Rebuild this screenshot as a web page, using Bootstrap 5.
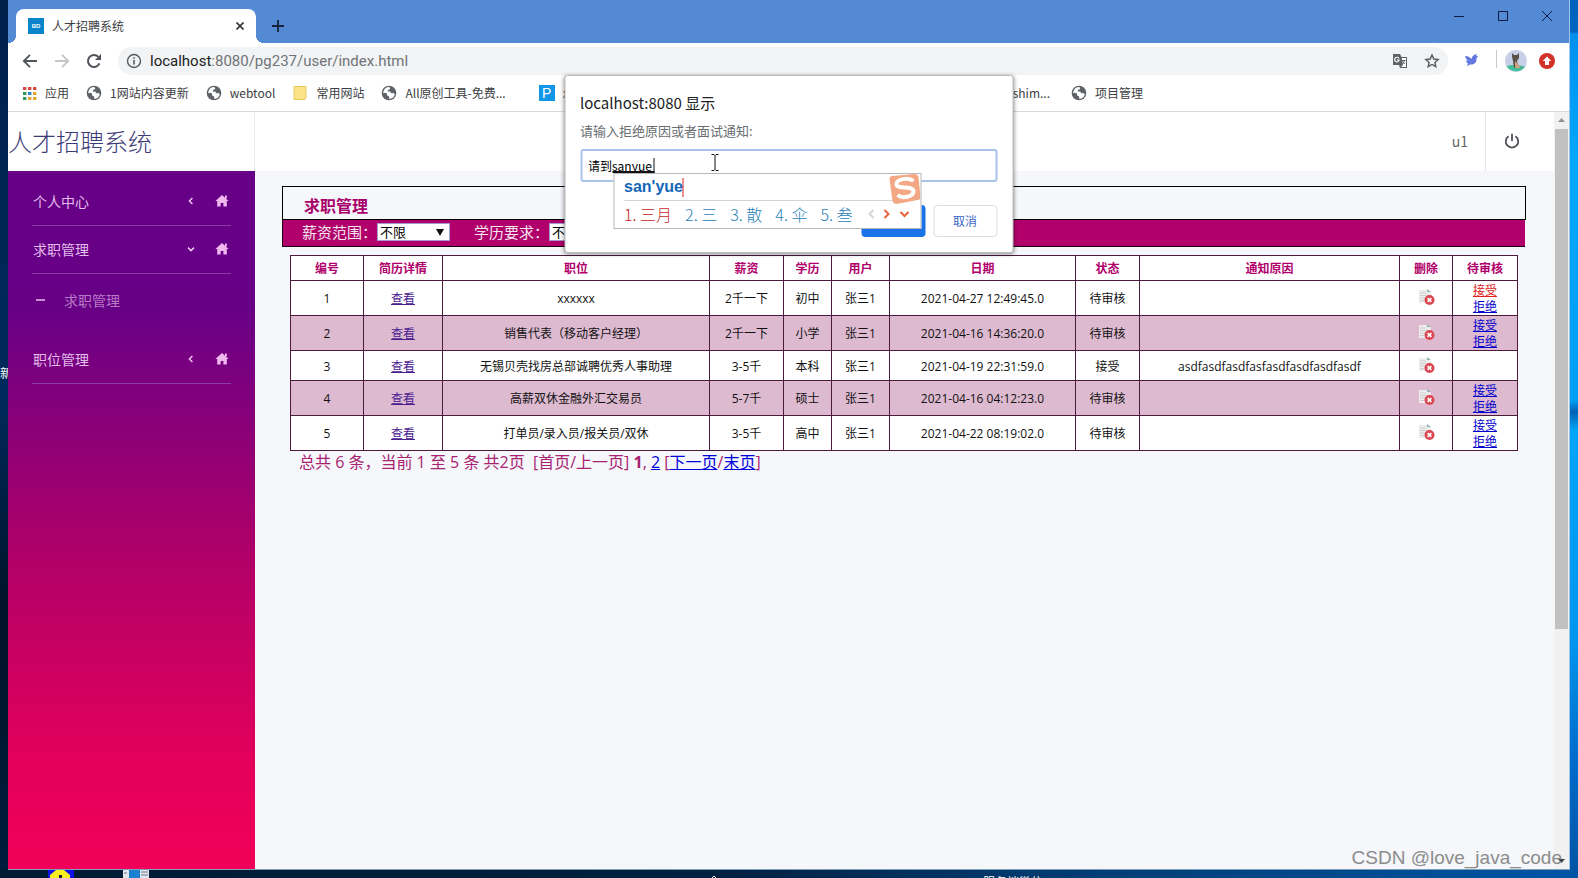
<!DOCTYPE html>
<html lang="zh-CN">
<head>
<meta charset="utf-8">
<meta name="viewport" content="width=device-width, initial-scale=1">
<title>人才招聘系统</title>
<link href="https://cdn.jsdelivr.net/npm/bootstrap@5.3.0/dist/css/bootstrap.min.css" rel="stylesheet">
<script src="https://cdn.jsdelivr.net/npm/bootstrap@5.3.0/dist/js/bootstrap.bundle.min.js"></script>
<style>
  body {
    font-family: "Noto Sans CJK SC", "Noto Sans", sans-serif;
    font-size: 12px;
    line-height: 16px;
    color: #222;
    background: linear-gradient(90deg, #001a33 0%, #00203f 45%, #003a6e 65%, #0055a5 100%);
    overflow: hidden;
  }
  svg { flex: none; display: block; }
  button { background: none; border: 0; padding: 0; color: inherit; }
  .desk-left { flex: none; width: 8px; background: linear-gradient(#00204a, #002a5c 45%, #001228 70%, #001c3c); }
  .desk-right { flex: none; width: 8px; background: linear-gradient(#0062ba 0, #0066c0 32px, #0090f0 34px, #00a8fa 160px, #00a0f4 400px, #0062b4 412px, #00a6f8 430px, #0096ee 640px, #006ccc 760px, #0055a5); }
  .desk-word { margin-top: 365px; color: #fff; width: 8px; overflow: hidden; white-space: nowrap; }
  .desk-bottom { height: 8px; overflow: hidden; color: #fff; }
  .browser { border-right: 1px solid #9fc4ea; border-bottom: 1px solid #7f9fb8; background: #fff; min-width: 0; }

  /* browser frame */
  .tab-strip { height: 43px; background: #5489d4; padding-left: 8px; }
  .tab-active { width: 240px; height: 34px; margin-top: 9px; background: #fff; border-radius: 8px 8px 0 0; padding: 0 12px; color: #3c4043; }
  .tab-active::before, .tab-active::after { content: ""; position: absolute; bottom: 0; width: 8px; height: 8px; }
  .tab-active::before { left: -8px; background: radial-gradient(circle at 0 0, transparent 8px, #fff 8px); }
  .tab-active::after { right: -8px; background: radial-gradient(circle at 100% 0, transparent 8px, #fff 8px); }
  .favicon { width: 16px; height: 16px; background: #0a85cc; color: #fff; font: bold 6px/16px "Liberation Sans", sans-serif; text-align: center; }
  .address-row { height: 36px; padding: 0 14px; }
  .omnibox { height: 28px; border-radius: 14px; background: #f1f3f4; padding: 0 8px; }
  .url-text { font: 15px/20px Roboto, "Noto Sans", sans-serif; color: #707478; text-decoration: none; }
  .url-text span { color: #202124; }
  .update-btn { margin-left: 12px; }
  .bookmarks { height: 33px; border-bottom: 1px solid #d8dadc; padding: 0 14px 4px; gap: 17px; white-space: nowrap; }
  .bookmarks a { color: #3c4043; text-decoration: none; gap: 8px; }
  .long-mark { width: 457px; }
  .p-logo { width: 16px; height: 16px; background: #1296e8; color: #fff; font: 14px/16px "Liberation Sans", sans-serif; text-align: center; }

  /* page header */
  .app-head { height: 59px; background: #fff; }
  .app-brand { width: 247px; padding-bottom: 2px; border-right: 1px solid #e8eaec; font-size: 24px; line-height: 32px; color: #3b3b78; text-decoration: none; font-weight: 300; }
  .user-name { font-size: 14px; color: #666; padding: 0 17px 2px; border-right: 1px solid #e4e6e8; }
  .power { width: 68px; padding: 0 0 2px 18px; }

  /* side menu */
  .side { flex: none; width: 247px; padding: 7px 24px; background: linear-gradient(#660087 0, #680086 20%, #b00068 55%, #e4005b 85%, #f00058 100%); }
  .side a { height: 48px; font-size: 14px; color: #e3bdec; text-decoration: none; }
  .side .menu-top { border-bottom: 1px solid #8c3aa4; gap: 20px; padding: 0 2px 2px 1px; }
  .side .menu-sub { height: 52px; margin-bottom: 10px; color: #b77ac6; gap: 19px; padding-left: 4px; }

  .content { background: #f5f7fb; padding: 15px 28px 0 27px; min-width: 0; }
  .title-box { height: 34px; border: 1px solid #000; padding-left: 21px; font-size: 16px; font-weight: 700; color: #a8006a; }
  .filter-bar { height: 27px; background: #b1006b; border: 1px solid #1c0010; border-top: 0; border-right: 0; margin-right: 1px; padding: 0 0 2px 19px; color: #f4e6ef; font-size: 15px; }
  .filter-bar select { width: 73px; height: 18px; border: 1px solid #a59ad0; border-radius: 0; background: #fff; color: #000; font-size: 13px; line-height: 16px; padding: 0 2px; appearance: none; }
  .pick::after { content: ""; position: absolute; right: 6px; top: 6px; border: 4px solid transparent; border-top: 7px solid #111; border-bottom: 0; }
  .list-wrap { padding: 8px 8px 0; }
  .jobs { width: 100%; table-layout: fixed; border-collapse: collapse; text-align: center; color: #111; background: #fff; font-family: "Open Sans", "Noto Sans CJK SC", sans-serif; }
  .jobs th, .jobs td { border: 1px solid #4c1a3c; padding: 2px 1px 0; height: 35px; }
  .jobs th { height: 25px; color: #b1006b; }
  .jobs .short td { height: 30px; }
  .jobs tr.tinted { background: #ddbad0; }
  .jobs a { color: #0000cc; text-decoration: underline; }
  .jobs a.seen { color: #4a2090; }
  .jobs a.hot { color: #e02020; }
  .pager { font: 16px/22px "Open Sans", "Noto Sans CJK SC", sans-serif; color: #a8226f; padding-left: 9px; white-space: pre; }
  .pager a { color: #0000dd; text-decoration: underline; }

  .bar-scroll { flex: none; width: 15px; background: #f1f1f1; }
  .bar-thumb { height: 500px; width: 13px; background: #c1c1c1; }

  /* prompt dialog */
  .prompt { top: 75px; width: 449px; height: 178px; background: #fff; border: 1px solid #bbb; border-radius: 3px; box-shadow: 0 1px 4px rgba(0,0,0,.45); padding: 15px; z-index: 5; }
  .prompt h1 { font: 15px/24px "Noto Sans CJK SC", sans-serif; color: #202124; margin: 0; }
  .prompt label { font-size: 13px; line-height: 20px; color: #6a6e72; margin: 6px 0 8px; }
  .field { height: 33px; border: 2px solid #a9c3ea; border-radius: 3px; padding: 0 6px; }
  .field input { width: 100%; border: 0; outline: 0; padding: 0; font-size: 12px; }
  .prompt-btns { margin-top: 23px; gap: 8px; }
  .prompt-btns button { width: 64px; height: 32px; border-radius: 4px; font-size: 12px; }
  .btn-yes { background: #1a73e8 !important; color: #fff; }
  .btn-no { border: 1px solid #dadce0 !important; color: #3a66c8; }
  .beam { left: 145px; top: 78px; }
  .ime { left: 48px; top: 97px; width: 308px; height: 56px; background: #fff; border: 1px solid #b8b8b8; padding: 0 6px 0 10px; }
  .ime-typed { height: 27px; font: bold 16px/28px "Liberation Sans", sans-serif; color: #1466b8; border-bottom: 1px solid #d4d4d4; width: 270px; }
  .ime-caret { width: 1px; height: 19px; background: #d02020; }
  .ime-list { height: 26px; font-size: 16px; line-height: 26px; color: #2a82b8; gap: 13px; white-space: nowrap; font-weight: 300; }
  .ime-list .first { color: #c41c1c; }
  .sogou { right: 0; top: 0; }
  .composing { left: 30px; top: 7px; width: 42px; height: 15px; border-bottom: 2px solid #111; border-right: 1px solid #111; }
  .watermark { right: 7px; bottom: -1px; font: 19px/24px "Liberation Sans", sans-serif; color: #8c8c8c; z-index: 6; }
</style>
</head>
<body class="vh-100 d-flex flex-column">
<svg class="d-none">
  <symbol id="globe" viewBox="0 0 16 16"><circle cx="8" cy="8" r="7.3" fill="#5f6368"/><path d="M3 5.2 C4 3 6 2 8.2 2.1 L9.3 3.2 8.5 4.6 6.8 5.1 6.9 6.4 9.4 6.5 10 8.3 12.6 8.1 13.8 9.4 C13.2 12 11 13.8 8.4 13.9 L8 11.5 6 10.2 6 8.6 3.8 7.8 2.2 8.2 C2.1 7.1 2.4 6.1 3 5.2Z" fill="#fff"/><path d="M9.6 2.4 C11.7 3 13 4.2 13.6 6.2 L11.4 6 10.4 4.4Z" fill="#5f6368"/></symbol>
  <symbol id="home" viewBox="0 0 14 14"><path d="M7 1 L13.6 7 H11.8 V12.6 H8.4 V9 H5.6 V12.6 H2.2 V7 H.4Z" fill="#efb9ee"/><path d="M10 1.6h1.8v3H10z" fill="#efb9ee"/></symbol>
  <symbol id="left" viewBox="0 0 8 8"><path d="M5.4 1 L2.4 4 5.4 7" fill="none" stroke="#efc4f0" stroke-width="1.5"/></symbol>
  <symbol id="down" viewBox="0 0 8 8"><path d="M1 2.6 L4 5.6 7 2.6" fill="none" stroke="#efc4f0" stroke-width="1.5"/></symbol>
  <symbol id="del" viewBox="0 0 18 18"><path d="M2 2h9l3 3v10H2z" fill="#ececec"/><path d="M3 5h6M3 7.5h7M3 10h5M3 12.5h4" stroke="#cfcfcf"/><path d="M10 1l4 3h-4z" fill="#8fb3ad"/><circle cx="12.5" cy="12" r="5" fill="#dc4550"/><path d="M10.6 10.1l3.8 3.8M14.4 10.1l-3.8 3.8" stroke="#fff" stroke-width="1.7"/></symbol>
</svg>

<div class="d-flex flex-grow-1" style="min-height:0">
  <div class="desk-left"><div class="desk-word">新</div></div>

  <div class="browser flex-grow-1 d-flex flex-column position-relative">
    <div class="tab-strip d-flex">
      <div class="tab-active position-relative d-flex align-items-center">
        <span class="favicon">BD</span><span class="ms-2 flex-grow-1">人才招聘系统</span>
        <button aria-label="关闭标签页"><svg width="8" height="8" viewBox="0 0 8 8"><path d="M.5.5l7 7M7.500.5l-7 7" stroke="#333" stroke-width="1.6"/></svg></button>
      </div>
      <button class="ms-3 mt-2" aria-label="新标签页"><svg width="12" height="12" viewBox="0 0 12 12"><path d="M6 0v12M0 6h12" stroke="#15233c" stroke-width="1.8"/></svg></button>
      <div class="ms-auto d-flex align-items-center gap-4 h-75 pe-3">
        <button class="me-1" aria-label="最小化"><svg width="12" height="12" viewBox="0 0 12 12"><path d="M1 6.500h10" stroke="#0b1a44"/></svg></button>
        <button class="ms-1 me-2" aria-label="最大化"><svg width="12" height="12" viewBox="0 0 12 12"><path d="M1.500 1.500h9v9h-9z" fill="none" stroke="#0b1a44"/></svg></button>
        <button aria-label="关闭"><svg width="12" height="12" viewBox="0 0 12 12"><path d="M1 1l10 10M11 1L1 11" stroke="#0b1a44"/></svg></button>
      </div>
    </div>

    <div class="address-row d-flex align-items-center">
      <button class="me-3" aria-label="后退"><svg width="16" height="16" viewBox="0 0 16 16"><path d="M15 8H2M8 1.800L1.800 8 8 14.200" fill="none" stroke="#50545a" stroke-width="1.8"/></svg></button>
      <button class="me-3" aria-label="前进"><svg width="16" height="16" viewBox="0 0 16 16"><path d="M1 8h13M8 1.800L14.200 8 8 14.200" fill="none" stroke="#c3c5c8" stroke-width="1.8"/></svg></button>
      <button class="me-3" aria-label="刷新"><svg width="16" height="16" viewBox="0 0 16 16"><path d="M13.500 10.400A6 6 0 1 1 12.400 3.900" fill="none" stroke="#50545a" stroke-width="2"/><path d="M15 1v6H9z" fill="#50545a"/></svg></button>
      <div class="omnibox d-flex align-items-center flex-grow-1">
        <svg width="16" height="16" viewBox="0 0 16 16"><circle cx="8" cy="8" r="6.500" fill="none" stroke="#55595e" stroke-width="1.400"/><path d="M8 7v4.500M8 4.200v1.600" stroke="#55595e" stroke-width="1.600"/></svg>
        <a class="url-text ms-2 me-auto" href="#"><span>localhost</span>:8080/pg237/user/index.html</a>
        <button aria-label="翻译"><svg width="16" height="16" viewBox="0 0 16 16"><path d="M1 1h7l1.500 3H15v11H8l-1-3H1z" fill="#5f6368"/><path d="M9.800 5H14v9H9l2-2z" fill="#fff"/><path d="M7 5.500A2.300 2.300 0 1 0 7.200 7H5" fill="none" stroke="#fff" stroke-width="1.100"/><path d="M10 7.500h3.500M12.800 7.500l-2.300 3.500M10.800 8.500l2 2.500" stroke="#5f6368" fill="none"/></svg></button>
        <button class="ms-3" aria-label="收藏"><svg width="16" height="16" viewBox="0 0 16 16"><path d="M8 2l1.800 4 4.300.5-3.200 2.900.9 4.300L8 11.500l-3.800 2.200.9-4.300L1.900 6.500 6.200 6z" fill="none" stroke="#55595e" stroke-width="1.400"/></svg></button>
      </div>
      <div class="d-flex align-items-center">
        <button class="ms-3" aria-label="扩展"><svg width="16" height="16" viewBox="0 0 16 16"><path d="M1 3c3 0 5 1 6.500 3C8 3 10 1.500 13 1l-1 2 2.500.5-2 1.500C13 9 10.500 12 6 11.500l-3 2 1-3C2.500 9.500 2 8.500 2 7.500l2 .2C2.500 6.500 1.500 5 1 3z" fill="#6478e0"/></svg></button>
        <span class="vr ms-3 me-2" style="height:18px"></span>
        <button aria-label="用户"><svg width="22" height="22" viewBox="0 0 22 22"><circle cx="11" cy="11" r="11" fill="#c9cfe6"/><path d="M1.500 16a11 11 0 0 0 18.500 0.500c-6-1.500-12-2-18.500-.5z" fill="#3fc09a"/><path d="M7 3l2 2h3l2-2v5l-2 3 1 5 4 2H9l-1-7-1-4z" fill="#5c5148"/><path d="M10 11l3 3 3 4h-6z" fill="#c9a27e"/></svg></button>
        <button class="update-btn" aria-label="更新"><svg width="16" height="16" viewBox="0 0 16 16"><circle cx="8" cy="8" r="8" fill="#d2322a"/><path d="M8 3.500L12.300 8H10v4H6V8H3.700z" fill="#fff"/></svg></button>
      </div>
    </div>

    <nav class="bookmarks d-flex align-items-center">
      <a href="#" class="d-flex align-items-center"><svg width="15" height="15" viewBox="0 0 15 15"><path d="M1 1h3.400v3H1zM6 1h3.400v3H6zM11 1h3.400v3H11z" fill="#d64a42"/><path d="M1 6h3.400v3H1z" fill="#2f9a57"/><path d="M6 6h3.400v3H6z" fill="#2f7fd6"/><path d="M11 6h3.400v3H11zM6 11h3.400v3H6zM11 11h3.400v3H11z" fill="#e5a630"/><path d="M1 11h3.400v3H1z" fill="#2f9a57"/></svg>应用</a>
      <a href="#" class="d-flex align-items-center"><svg width="16" height="16"><use href="#globe"/></svg>1网站内容更新</a>
      <a href="#" class="d-flex align-items-center"><svg width="16" height="16"><use href="#globe"/></svg>webtool</a>
      <a href="#" class="d-flex align-items-center"><svg width="16" height="16" viewBox="0 0 16 16"><path d="M2 1.500h12v10.500l-1 2.500H2z" fill="#fbe486" stroke="#e6c95c"/></svg>常用网站</a>
      <a href="#" class="d-flex align-items-center"><svg width="16" height="16"><use href="#globe"/></svg>All原创工具-免费...</a>
      <a href="#" class="long-mark d-flex align-items-center ms-3"><span class="p-logo">P</span>x</a>
      <a href="#">shim...</a>
      <a href="#" class="d-flex align-items-center ms-1"><svg width="16" height="16"><use href="#globe"/></svg>项目管理</a>
    </nav>

    <div class="d-flex flex-grow-1" style="min-height:0">
      <div class="flex-grow-1 d-flex flex-column" style="min-width:0">
        <header class="app-head d-flex align-items-stretch">
          <a class="app-brand d-flex align-items-center" href="#">人才招聘系统</a>
          <span class="user-name ms-auto d-flex align-items-center">u1</span>
          <button class="power" aria-label="退出"><svg width="16" height="16" viewBox="0 0 16 16"><path d="M4.600 3.200a6.200 6.200 0 1 0 6.800 0M8 .8v7.200" fill="none" stroke="#505458" stroke-width="1.800"/></svg></button>
        </header>
        <div class="d-flex flex-grow-1">
          <nav class="side">
            <a href="#" class="menu-top d-flex align-items-center"><span class="me-auto">个人中心</span><svg width="8" height="8"><use href="#left"/></svg><svg width="14" height="14"><use href="#home"/></svg></a>
            <a href="#" class="menu-top d-flex align-items-center"><span class="me-auto">求职管理</span><svg width="8" height="8"><use href="#down"/></svg><svg width="14" height="14"><use href="#home"/></svg></a>
            <a href="#" class="menu-sub d-flex align-items-center"><svg width="9" height="2"><path d="M0 1h9" stroke="#c88fd4" stroke-width="2"/></svg>求职管理</a>
            <a href="#" class="menu-top d-flex align-items-center"><span class="me-auto">职位管理</span><svg width="8" height="8"><use href="#left"/></svg><svg width="14" height="14"><use href="#home"/></svg></a>
          </nav>
          <main class="content flex-grow-1">
            <div class="title-box d-flex align-items-center pt-1">求职管理</div>
            <div class="filter-bar d-flex align-items-center">
              <label for="pay">薪资范围：</label>
              <span class="pick position-relative d-flex me-4"><select id="pay"><option>不限</option></select></span>
              <label for="edu">学历要求：</label>
              <span class="pick position-relative d-flex"><select id="edu"><option>不限</option></select></span>
            </div>
            <div class="list-wrap">
              <table class="jobs">
                <colgroup id="cols"></colgroup>
                <thead><tr><th>编号</th><th>简历详情</th><th>职位</th><th>薪资</th><th>学历</th><th>用户</th><th>日期</th><th>状态</th><th>通知原因</th><th>删除</th><th>待审核</th></tr></thead>
                <tbody id="rows"></tbody>
              </table>
              <div class="pager">总共 6 条，当前 1 至 5 条 共2页  [首页/上一页] <b>1</b>, <a href="#">2</a> [<a href="#">下一页</a>/<a href="#">末页</a>]</div>
            </div>
          </main>
        </div>
      </div>
      <div class="bar-scroll d-flex flex-column align-items-center">
        <svg width="13" height="17" viewBox="0 0 13 17"><path d="M3 10l3.500-4 3.500 4z" fill="#909090"/></svg>
        <div class="bar-thumb"></div>
        <svg class="mt-auto" width="13" height="16" viewBox="0 0 13 16"><path d="M3 6l3.500 4L10 6z" fill="#404040"/></svg>
      </div>
    </div>

    <form class="prompt position-absolute start-50 translate-middle-x">
      <h1>localhost:8080 显示</h1>
      <label class="d-block" for="reason">请输入拒绝原因或者面试通知:</label>
      <div class="field position-relative d-flex align-items-center"><input id="reason" value="请到sanyue"><span class="composing position-absolute"></span></div>
      <div class="prompt-btns d-flex justify-content-end">
        <button type="button" class="btn-yes" aria-label="确定"></button>
        <button type="button" class="btn-no">取消</button>
      </div>
      <svg class="beam position-absolute" width="9" height="17" viewBox="0 0 9 17"><path d="M1 .5h2.500l1 1 1-1H8M4.500 1.500v14M1 16.500h2.500l1-1 1 1H8" fill="none" stroke="#111"/></svg>
      <div class="ime position-absolute">
        <div class="ime-typed d-flex align-items-center">san'yue<span class="ime-caret"></span></div>
        <div class="ime-list d-flex align-items-center"><span class="first">1. 三月</span><span>2. 三</span><span>3. 散</span><span>4. 伞</span><span>5. 叁</span>
          <svg class="ms-auto" width="46" height="10" viewBox="0 0 46 10"><path d="M5 1L1 5l4 4" fill="none" stroke="#d5d5d5" stroke-width="2"/><path d="M16 1l4 4-4 4M32 3l4 4 4-4" fill="none" stroke="#e8643c" stroke-width="2"/></svg>
        </div>
        <svg class="sogou position-absolute" width="32" height="30" viewBox="0 0 32 30"><path d="M1 5Q1 2 4 2L26 0Q29 0 30 3L32 23Q32 26 29 26L8 30Q5 30 4 27Z" fill="#f3a784"/><path d="M25 7C20 3 8 5 8 10C8 16 24 11 25 17C25 23 14 25 9 21" fill="none" stroke="#fff" stroke-width="4"/></svg>
      </div>
    </form>
    <div class="watermark position-absolute">CSDN @love_java_code</div>
  </div>

  <div class="desk-right"></div>
</div>
<div class="desk-bottom d-flex">
  <svg width="983" height="8" viewBox="0 0 983 8"><path d="M48 0h26v8H48z" fill="#1010e8"/><path d="M56 0h8l6 5v3H50V5z" fill="#f8f020"/><path d="M59 5h3v3h-3z" fill="#222"/><path d="M123 0h26v8h-26z" fill="#dfe6f0"/><path d="M129 0h11v8h-11z" fill="#1a80d0"/><path d="M141 2h7M141 5h7M124 3h3" stroke="#6a7688"/><path d="M712 8l2-2 2 2" fill="none" stroke="#fff"/></svg>
  <span class="pt-1">服务端微信</span>
</div>

<script>
  // column widths, shared out in proportion to the table's width
  const widths = [73, 79, 267, 74, 48, 58, 186, 64, 260, 53, 65];
  const total = widths.reduce((a, b) => a + b, 0);
  document.getElementById('cols').innerHTML = widths.map(w => `<col style="width:${w / total * 100}%">`).join('');

  const jobs = [
    ['xxxxxx', '2千一下', '初中', '2021-04-27 12:49:45.0', '待审核', ''],
    ['销售代表（移动客户经理）', '2千一下', '小学', '2021-04-16 14:36:20.0', '待审核', ''],
    ['无锡贝壳找房总部诚聘优秀人事助理', '3-5千', '本科', '2021-04-19 22:31:59.0', '接受', 'asdfasdfasdfasfasdfasdfasdfasdf'],
    ['高薪双休金融外汇交易员', '5-7千', '硕士', '2021-04-16 04:12:23.0', '待审核', ''],
    ['打单员/录入员/报关员/双休', '3-5千', '高中', '2021-04-22 08:19:02.0', '待审核', '']
  ];
  document.getElementById('rows').innerHTML = jobs.map((j, i) => {
    const done = j[4] === '接受';
    const act = done ? '' : `<a href="#" class="${i ? '' : 'hot'}">接受</a><br><a href="#">拒绝</a>`;
    return `<tr class="${i % 2 ? 'tinted' : ''} ${done ? 'short' : ''}"><td>${i + 1}</td><td><a href="#" class="seen">查看</a></td>
      <td>${j[0]}</td><td>${j[1]}</td><td>${j[2]}</td><td>张三1</td><td>${j[3]}</td><td>${j[4]}</td><td>${j[5]}</td>
      <td><button aria-label="删除"><svg width="18" height="18"><use href="#del"/></svg></button></td><td>${act}</td></tr>`;
  }).join('');
</script>
</body>
</html>
